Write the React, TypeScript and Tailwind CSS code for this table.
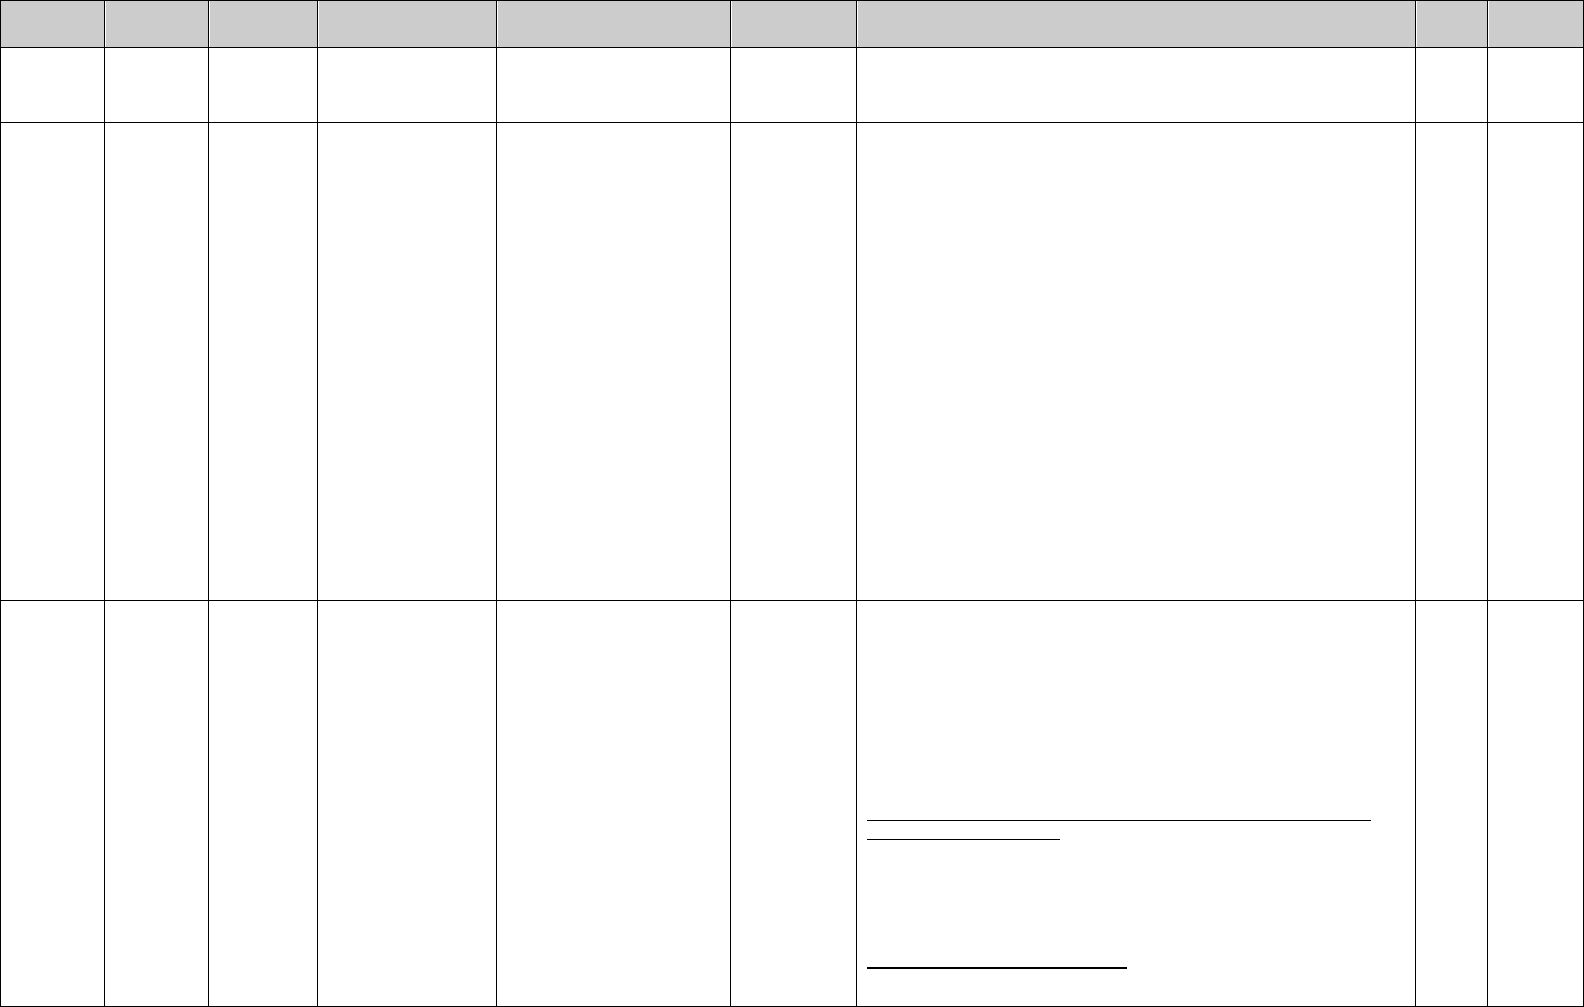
const COLS = "grid-cols-[103px_103px_108px_178px_233px_125px_558px_71px_95px]";
const ROWS = "grid-rows-[46px_74px_477px_405px]";

function HeaderCell({ first }: { first?: boolean }) {
  return <div className={first ? "bg-[#cccccc]" : "border-l border-white bg-[#cccccc]"} />;
}

function Cell({ children }: { children?: React.ReactNode }) {
  return <div className="bg-white">{children}</div>;
}

export default function App() {
  const header = Array.from({ length: 9 }, (_, i) => <HeaderCell key={i} first={i === 0} />);
  const emptyRow = (r: number) => Array.from({ length: 9 }, (_, i) => <Cell key={`${r}-${i}`} />);

  return (
    <div className="h-[1007px] w-[1584px] bg-white font-['Liberation_Sans',sans-serif]">
      <div className={`grid ${COLS} ${ROWS} gap-px bg-black p-px`}>
        {header}
        {emptyRow(1)}
        {emptyRow(2)}
        {Array.from({ length: 6 }, (_, i) => (
          <Cell key={`3-${i}`} />
        ))}
        <Cell>
          <div className="flex flex-col items-start pl-[10px] pt-[219px]">
            <div className="h-px w-[504px] bg-black" />
            <div className="mt-[18px] h-px w-[193px] bg-black" />
            <div className="mt-[127px] h-[2px] w-[260px] bg-black" />
          </div>
        </Cell>
        <Cell />
        <Cell />
      </div>
    </div>
  );
}
